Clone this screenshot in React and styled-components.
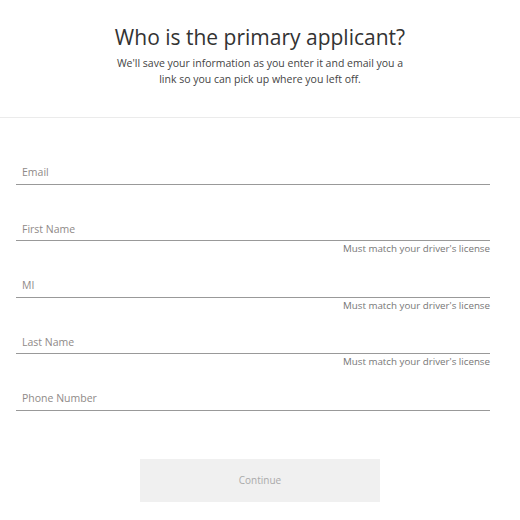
import styled, { createGlobalStyle } from "styled-components";

const Global = createGlobalStyle`
  body {
    margin: 0;
    background: #fff;
    font-family: "Open Sans", "Noto Sans", sans-serif;
  }
`;

const Page = styled.div`
  width: 520px;
`;

const Header = styled.header`
  padding: 22px 0 30px;
  text-align: center;
  border-bottom: 1px solid #ebebeb;
`;

const Title = styled.h1`
  margin: 0 0 3px;
  font-size: 21px;
  line-height: 30px;
  font-weight: 400;
  color: #333;
`;

const Sub = styled.p`
  margin: 0 auto;
  width: 300px;
  font-size: 10.5px;
  line-height: 16px;
  color: #444;
`;

const Form = styled.form`
  padding: 42px 30px 0 16px;
  display: flex;
  flex-direction: column;
`;

const Field = styled.div`
  height: 56.5px;
  display: flex;
  flex-direction: column;
`;

const Input = styled.input`
  height: 24.5px;
  box-sizing: border-box;
  border: 0;
  border-bottom: 1px solid #999;
  padding: 1px 6px 0;
  font-family: inherit;
  font-size: 10.5px;
  color: #333;
  outline: none;
  background: transparent;
  &::placeholder {
    color: #8f8a88;
  }
`;

const Hint = styled.span`
  align-self: flex-end;
  margin-top: 1px;
  font-size: 9.75px;
  line-height: 14px;
  color: #777;
`;

const Actions = styled.div`
  display: flex;
  justify-content: center;
  padding-top: 16px;
`;

const Button = styled.button`
  width: 240px;
  height: 43px;
  border: 0;
  background: #f0f0f0;
  color: #aaa;
  font-family: inherit;
  font-size: 10px;
`;

const fields = [
  { label: "Email" },
  { label: "First Name", hint: true },
  { label: "MI", hint: true },
  { label: "Last Name", hint: true },
  { label: "Phone Number" },
];

export default function App() {
  return (
    <Page>
      <Global />
      <Header>
        <Title>Who is the primary applicant?</Title>
        <Sub>
          We'll save your information as you enter it and email you a link so
          you can pick up where you left off.
        </Sub>
      </Header>
      <Form onSubmit={(e) => e.preventDefault()}>
        {fields.map((f) => (
          <Field key={f.label}>
            <Input placeholder={f.label} />
            {f.hint && <Hint>Must match your driver's license</Hint>}
          </Field>
        ))}
      </Form>
      <Actions>
        <Button type="button">Continue</Button>
      </Actions>
    </Page>
  );
}
